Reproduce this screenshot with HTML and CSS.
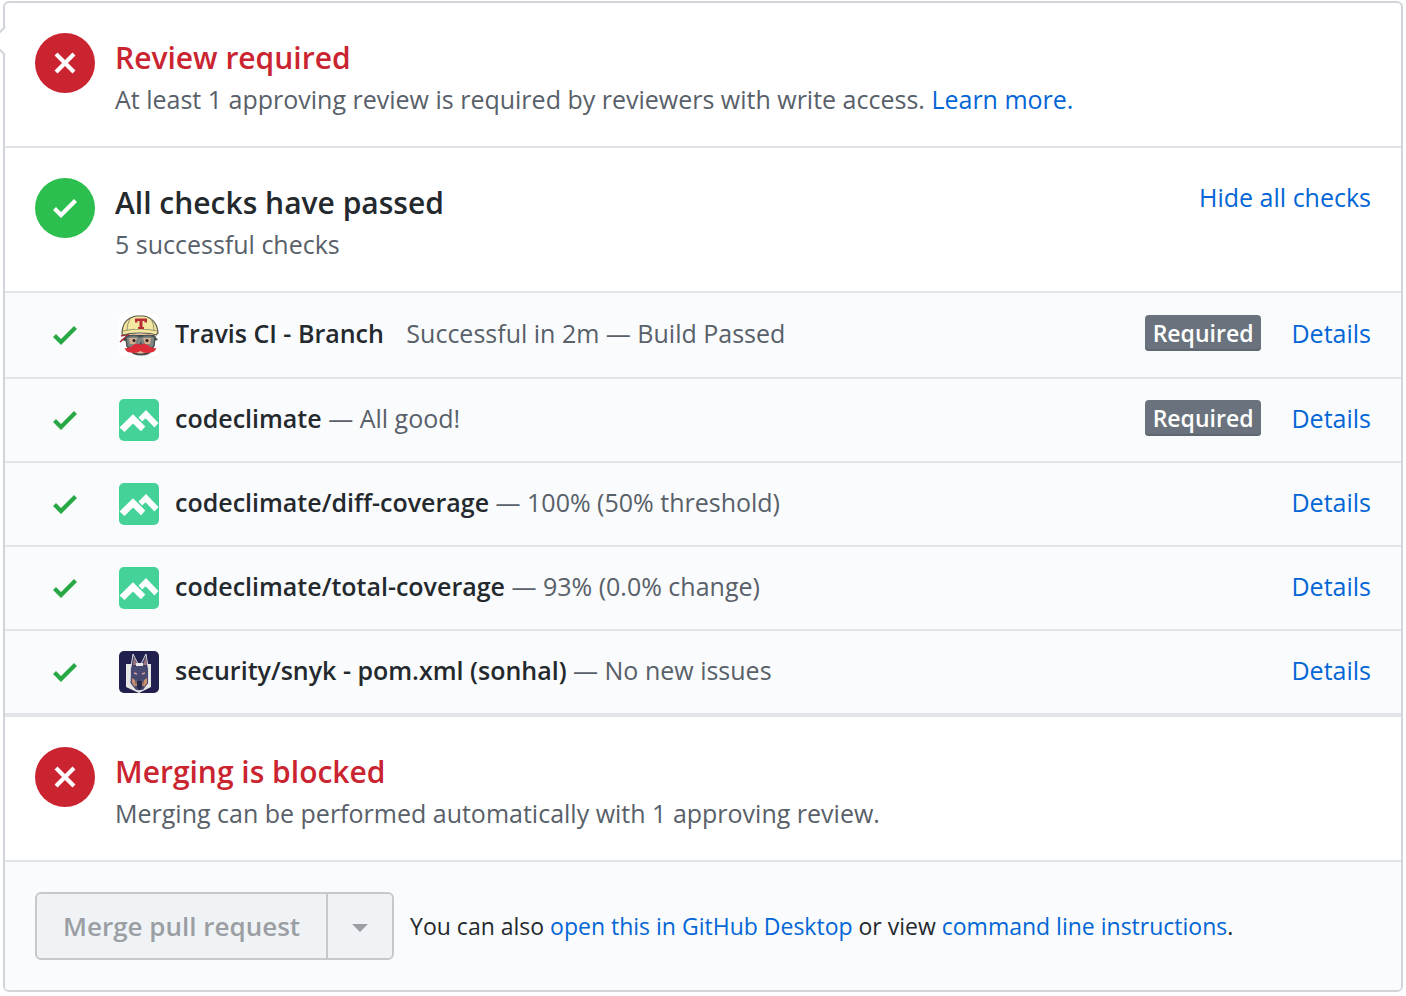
FILE: index.html
```html
<!DOCTYPE html>
<html lang="en">
<head>
<meta charset="utf-8">
<title>Merge status</title>
<link rel="stylesheet" href="styles.css">
</head>
<body>
<svg class="defs" width="0" height="0" aria-hidden="true">
  <symbol id="check" viewBox="0 0 12 16"><path d="M12 5l-8 8-4-4 1.500-1.500L4 10l6.500-6.500z"/></symbol>
  <symbol id="cross" viewBox="0 0 12 16"><path d="M7.480 8l3.750 3.750-1.480 1.480L6 9.480l-3.750 3.750-1.480-1.480L4.520 8 .770 4.250l1.480-1.480L6 6.520l3.750-3.750 1.480 1.480z"/></symbol>
  <symbol id="climate" viewBox="0 0 40 42"><rect width="40" height="42" rx="5" fill="#45d298"/><path d="M.500 28.500L14 15.300 26.300 27.500l-4.300 4.700-8-7.700-8.500 8.500zM19.500 18.500l7.500-7.500L39.500 24l-4 4.500-9-9.300-3.200 3.300z" fill="#fff"/></symbol>
</svg>
<main class="merge-box">
  <svg class="pointer" viewBox="0 0 6 28" aria-hidden="true"><path d="M6 0L-8 14 6 28z" fill="#fff"/><path d="M5 0L-9 14 5 28" fill="none" stroke="#d1d5da" stroke-width="2"/></svg>
  <section class="status">
    <span class="badge badge-red"><svg class="icon"><use href="#cross"/></svg></span>
    <div class="status-text">
      <h2 class="title title-red">Review required</h2>
      <p class="subtitle">At least 1 approving review is required by reviewers with write access. <a href="#">Learn more.</a></p>
    </div>
  </section>
  <section class="status">
    <span class="badge badge-green"><svg class="icon"><use href="#check"/></svg></span>
    <div class="status-text">
      <h2 class="title">All checks have passed</h2>
      <p class="subtitle">5 successful checks</p>
    </div>
    <button type="button" class="toggle">Hide all checks</button>
  </section>
  <ul class="checks">
    <li class="check">
      <svg class="icon tick"><use href="#check"/></svg>
      <svg class="avatar" viewBox="0 0 40 42" aria-hidden="true">
        <rect width="40" height="42" rx="5" fill="#fff"/>
        <path d="M6 20h30l-1 12q-5 8-13 9T7 32z" fill="#e8bd9e"/>
        <path d="M10 36q11 7 24 0l-4 4q-8 3-16 0z" fill="#4a4a4a"/>
        <path d="M2 26l7-5h26l4 5-5 1H7z" fill="#3b4545"/>
        <path d="M1 28l8-7M2 22l8-2" stroke="#b52632" stroke-width="1.600"/>
        <path d="M7 23q8-3 14 0 8-3 15 0l-1 9q-2 3-6 3-5 0-7-6-2 6-8 6-4 0-6-3z" fill="#7d8680" stroke="#4b5554" stroke-width="1.500"/>
        <path d="M10 24h8l-2 6h-5zM24 24h8l-1 6h-5z" fill="#d6ad90"/><circle cx="15" cy="26.500" r="1.500" fill="#222"/><circle cx="28" cy="26.500" r="1.500" fill="#222"/>
        <path d="M3 20Q3 5 17 2h8q13 3 14 17l-2 2q-4-2-16-2T5 21z" fill="#f3e7a2" stroke="#58584a" stroke-width="1.200"/>
        <path d="M11 5q-3 5-3 11M32 5q3 5 3 11M4 17q17-4 34 0" fill="none" stroke="#9b946a" stroke-width="1"/>
        <path d="M15 3h13v12H15z" fill="#f3e7a2"/><path d="M16 4.500h12v4h-2.500V7H23.500v6H25v2h-6v-2h1.500V7h-2v1.500H16z" fill="#b92b32"/>
        <path d="M21.500 31q3.500-2.500 7 0 4 4 9 3-2 5-7 4.500-5 1.500-9-1.500-5 3-9 1.500-5 .500-7-4.500 5 1 9-3 3.500-2.500 7 0z" fill="#dc2c38"/>
      </svg>
      <p class="check-text"><strong class="name wide">Travis CI - Branch</strong> Successful in 2m — Build Passed</p>
      <span class="label">Required</span>
      <a class="details" href="#">Details</a>
    </li>
    <li class="check">
      <svg class="icon tick"><use href="#check"/></svg>
      <svg class="avatar"><use href="#climate"/></svg>
      <p class="check-text"><strong class="name">codeclimate</strong> — All good!</p>
      <span class="label">Required</span>
      <a class="details" href="#">Details</a>
    </li>
    <li class="check">
      <svg class="icon tick"><use href="#check"/></svg>
      <svg class="avatar"><use href="#climate"/></svg>
      <p class="check-text"><strong class="name">codeclimate/diff-coverage</strong> — 100% (50% threshold)</p>
      <a class="details" href="#">Details</a>
    </li>
    <li class="check">
      <svg class="icon tick"><use href="#check"/></svg>
      <svg class="avatar"><use href="#climate"/></svg>
      <p class="check-text"><strong class="name">codeclimate/total-coverage</strong> — 93% (0.0% change)</p>
      <a class="details" href="#">Details</a>
    </li>
    <li class="check">
      <svg class="icon tick"><use href="#check"/></svg>
      <svg class="avatar" viewBox="0 0 40 42" aria-hidden="true">
        <rect width="40" height="42" rx="5" fill="#201f4d"/>
        <path d="M7 13h25v23l-12 6-13-6z" fill="#e8e8e6"/>
        <path d="M12 16l2-13 5 10h3l5-10 2 13v17l-5 5-4 2-4-2-5-6z" fill="#3c3e65" stroke="#d9d9df" stroke-width="1"/>
        <path d="M14 14l1-8 3 8zM24 14l3-8 1 8z" fill="#9b7780"/>
        <path d="M17 12h7v3h-7z" fill="#e8e8e6"/>
        <path d="M12 17l4-2h9l4 2v15l-5 7h-7l-5-7z" fill="#474970"/>
        <path d="M13 27l3 2v7l-3-4zM28 27l-3 2v7l3-4zM17 28l1 7h-2zM24 28l-1 7h2z" fill="#c98e6c"/>
        <path d="M15 22l3 1M23 23l3-1" stroke="#d4a1a0" stroke-width="1.500"/>
        <path d="M18 30h5v6l-2 3h-1l-2-3z" fill="#26284a"/>
      </svg>
      <p class="check-text"><strong class="name">security/snyk - pom.xml (sonhal)</strong> — No new issues</p>
      <a class="details" href="#">Details</a>
    </li>
  </ul>
  <section class="status">
    <span class="badge badge-red"><svg class="icon"><use href="#cross"/></svg></span>
    <div class="status-text">
      <h2 class="title title-red">Merging is blocked</h2>
      <p class="subtitle">Merging can be performed automatically with 1 approving review.</p>
    </div>
  </section>
  <footer class="actions">
    <div class="button-group">
      <button type="button" class="btn" disabled>Merge pull request</button>
      <button type="button" class="btn btn-caret" aria-label="Select merge method" disabled><span class="caret"></span></button>
    </div>
    <p class="hint">You can also <a href="#">open this in GitHub Desktop</a> or view <a href="#">command line instructions</a>.</p>
  </footer>
</main>
</body>
</html>
```
FILE: styles.css
```css
* { box-sizing: border-box; }
body {
  margin: 0;
  padding: 1px 3px 4px;
  background: #fff;
  color: #24292e;
  font: 25px/36px "Open Sans", "Noto Sans", sans-serif;
}
h2, p, ul { margin: 0; padding: 0; }
a, .toggle { color: #0366d6; text-decoration: none; }
.defs { position: absolute; }
.merge-box {
  position: relative;
  border: 2px solid #d1d5da;
  border-radius: 6px;
}
.pointer { position: absolute; left: -5px; top: 24px; width: 6px; height: 28px; }
.status {
  display: flex;
  align-items: flex-start;
  gap: 20px;
  padding: 30px 30px 28px;
  border-bottom: 2px solid #e1e4e8;
}
.badge {
  display: flex;
  flex: none;
  align-items: center;
  justify-content: center;
  width: 60px;
  height: 60px;
  border-radius: 50%;
  color: #fff;
}
.badge-red { background: #cb2431; }
.badge-green { background: #2cbe4e; }
.icon { width: 24px; height: 32px; fill: currentColor; }
.status-text { flex: 1; padding-top: 3px; }
.title { font-size: 30px; font-weight: 600; line-height: 44px; }
.title-red { color: #cb2431; }
.subtitle { color: #586069; line-height: 38px; }
.toggle { padding: 1px 0; border: 0; background: none; font: inherit; }
.checks { list-style: none; border-bottom: 4px solid #e1e4e8; }
.check {
  display: flex;
  align-items: center;
  height: 84px;
  padding: 0 30px;
  background: #fafbfc;
}
.check + .check { border-top: 2px solid #e1e4e8; }
.tick { flex: none; margin: 0 42px 0 18px; color: #28a745; }
.avatar { flex: none; width: 40px; height: 42px; margin-right: 16px; }
.check-text { flex: 1; margin-bottom: 4px; color: #586069; }
.name { color: #24292e; font-weight: 600; }
.wide { margin-right: 16px; }
.label {
  margin-bottom: 4px;
  padding: 0 8px;
  border-radius: 4px;
  background: #6a737d;
  box-shadow: inset 0 -2px 0 #5f6871;
  color: #fff;
  font-size: 23px;
  font-weight: 600;
}
.details { margin: 0 0 4px 30px; }
.actions {
  display: flex;
  align-items: center;
  gap: 16px;
  padding: 30px;
  border-radius: 0 0 4px 4px;
  background: #fafbfc;
}
.button-group { display: flex; }
.btn {
  height: 68px;
  padding: 0 26px;
  border: 2px solid #c5c9cc;
  border-radius: 6px 0 0 6px;
  background: #eff3f6;
  color: #9b9fa3;
  font: 600 26px/36px "Open Sans", "Noto Sans", sans-serif;
}
.btn-caret { margin-left: -2px; padding: 4px 24px 0; border-radius: 0 6px 6px 0; }
.caret {
  display: block;
  border: 8px solid transparent;
  border-top-color: currentColor;
  border-bottom: 0;
}
.hint { font-size: 23px; }
```
